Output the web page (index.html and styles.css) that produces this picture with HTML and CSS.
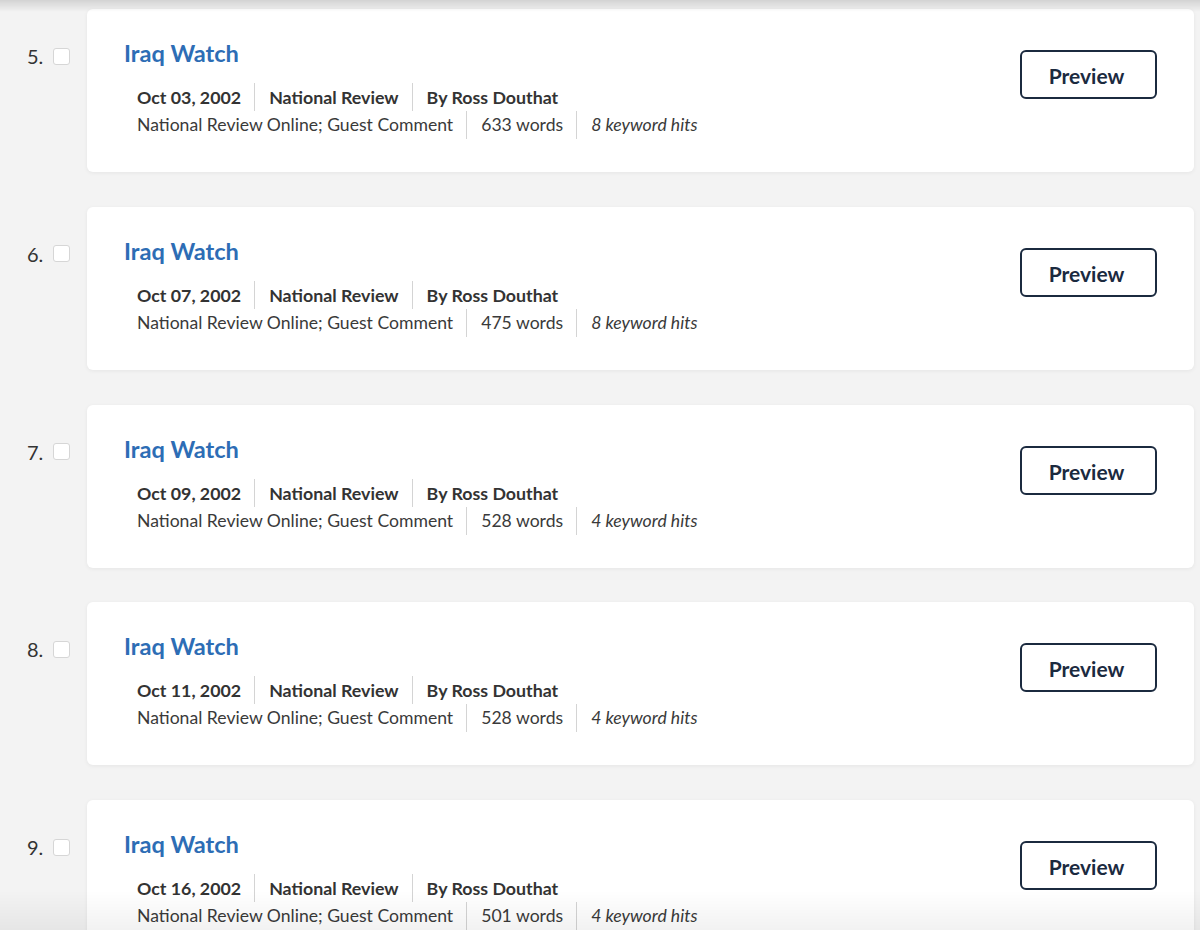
FILE: index.html
```html
<!DOCTYPE html>
<html>
<head>
    <meta charset="UTF-8">
    <title>Search results</title>
    <link rel="stylesheet" href="styles.css">
</head>
<body>
<div class="topShade"></div>
<ul class="results">
    <li class="row">
        <div class="idx"><span class="num">5.</span><span class="check"></span></div>
        <div class="card">
            <div class="info">
                <a class="title" href="#">Iraq Watch</a>
                <div class="meta strong"><span>Oct 03, 2002</span><span>National Review</span><span>By Ross Douthat</span></div>
                <div class="meta"><span>National Review Online; Guest Comment</span><span>633 words</span><span class="hits">8 keyword hits</span></div>
            </div>
            <button class="preview">Preview</button>
        </div>
    </li>
    <li class="row">
        <div class="idx"><span class="num">6.</span><span class="check"></span></div>
        <div class="card">
            <div class="info">
                <a class="title" href="#">Iraq Watch</a>
                <div class="meta strong"><span>Oct 07, 2002</span><span>National Review</span><span>By Ross Douthat</span></div>
                <div class="meta"><span>National Review Online; Guest Comment</span><span>475 words</span><span class="hits">8 keyword hits</span></div>
            </div>
            <button class="preview">Preview</button>
        </div>
    </li>
    <li class="row">
        <div class="idx"><span class="num">7.</span><span class="check"></span></div>
        <div class="card">
            <div class="info">
                <a class="title" href="#">Iraq Watch</a>
                <div class="meta strong"><span>Oct 09, 2002</span><span>National Review</span><span>By Ross Douthat</span></div>
                <div class="meta"><span>National Review Online; Guest Comment</span><span>528 words</span><span class="hits">4 keyword hits</span></div>
            </div>
            <button class="preview">Preview</button>
        </div>
    </li>
    <li class="row">
        <div class="idx"><span class="num">8.</span><span class="check"></span></div>
        <div class="card">
            <div class="info">
                <a class="title" href="#">Iraq Watch</a>
                <div class="meta strong"><span>Oct 11, 2002</span><span>National Review</span><span>By Ross Douthat</span></div>
                <div class="meta"><span>National Review Online; Guest Comment</span><span>528 words</span><span class="hits">4 keyword hits</span></div>
            </div>
            <button class="preview">Preview</button>
        </div>
    </li>
    <li class="row">
        <div class="idx"><span class="num">9.</span><span class="check"></span></div>
        <div class="card">
            <div class="info">
                <a class="title" href="#">Iraq Watch</a>
                <div class="meta strong"><span>Oct 16, 2002</span><span>National Review</span><span>By Ross Douthat</span></div>
                <div class="meta"><span>National Review Online; Guest Comment</span><span>501 words</span><span class="hits">4 keyword hits</span></div>
            </div>
            <button class="preview">Preview</button>
        </div>
    </li>
</ul>
<div class="bottomShade"></div>
</body>
</html>
```

FILE: styles.css
```css
body,ul,li{
    margin: 0;
    padding: 0;
    list-style: none;
}
body{
    background-color: #f3f3f3;
    font-family: Lato, "Noto Sans", sans-serif;
    color: #333;
}
.topShade{
    position: fixed;
    top: 0;left: 0;right: 0;
    height: 12px;
    background: linear-gradient(rgba(0,0,0,0.13), rgba(0,0,0,0));
    z-index: 2;
}
.bottomShade{
    position: fixed;
    bottom: 0;left: 0;right: 0;
    height: 40px;
    background: linear-gradient(rgba(0,0,0,0), rgba(0,0,0,0.05));
    z-index: 2;
}
.results{
    padding-top: 9px;
    display: flex;
    flex-direction: column;
    gap: 34.75px;
}
.row{
    display: flex;
    align-items: flex-start;
}
.idx{
    width: 87px;
    flex-shrink: 0;
    padding: 37px 0 0 27px;
    box-sizing: border-box;
    display: flex;
    align-items: center;
    gap: 10px;
}
.num{
    font-size: 20px;
    line-height: 20px;
    color: #333;
}
.check{
    width: 15px;height: 15px;
    border: 1px solid #d6d6d6;
    border-radius: 3px;
    background-color: #fff;
}
.card{
    flex: 1;
    margin-right: 6px;
    height: 163px;
    box-sizing: border-box;
    padding: 29px 37px 0 37px;
    background-color: #fff;
    border-radius: 6px;
    box-shadow: 0 1px 4px rgba(0,0,0,0.06);
    display: flex;
    justify-content: space-between;
    align-items: flex-start;
}
.title{
    display: block;
    font-size: 23.6px;
    line-height: 30px;
    font-weight: bold;
    color: #2d6db5;
    text-decoration: none;
}
.meta{
    display: flex;
    padding-left: 13px;
    font-size: 17.6px;
    line-height: 28px;
    color: #3a3a3a;
}
.meta.strong{
    margin-top: 15px;
    font-size: 17.8px;
    font-weight: bold;
    color: #333;
}
.meta span{
    padding: 0 13px 0 14px;
    border-left: 1px solid #d4d4d4;
}
.meta span:first-child{
    padding-left: 0;
    border-left: none;
}
.meta .hits{
    font-style: italic;
}
.preview{
    margin-top: 12px;
    width: 137px;height: 49px;
    border: 2px solid #1b2a3f;
    border-radius: 6px;
    background-color: #fff;
    color: #1b2a3f;
    font-family: Lato, "Noto Sans", sans-serif;
    font-size: 21px;
    font-weight: bold;
    padding: 2px 4px 0 0;
    cursor: pointer;
}
```
